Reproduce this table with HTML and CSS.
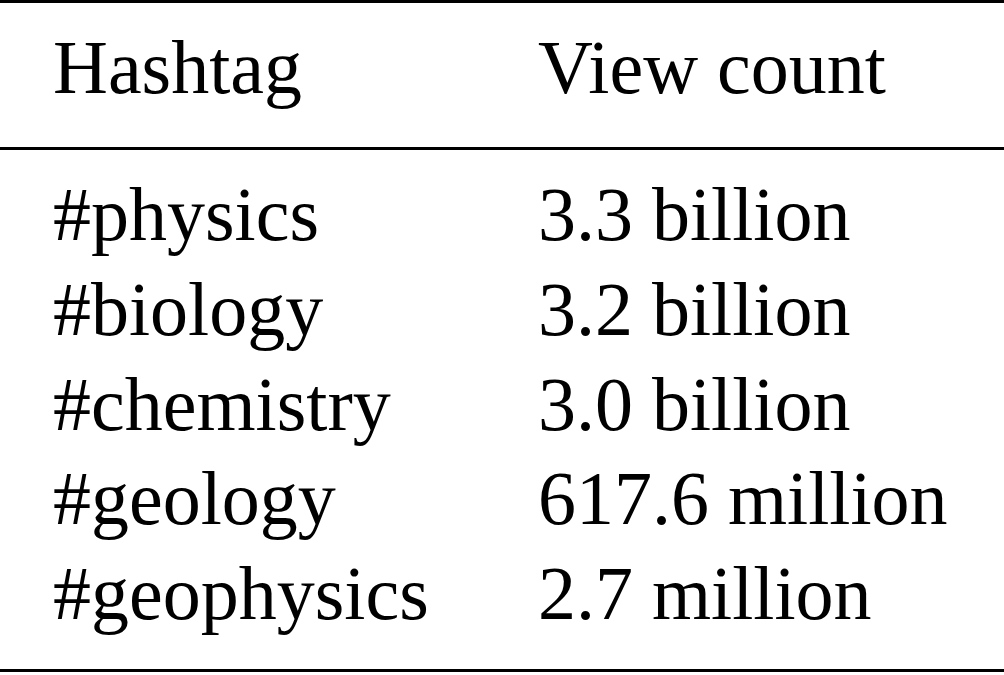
FILE: index.html
```html
<!DOCTYPE html>
<html>
<head>
<meta charset="utf-8">
<link rel="stylesheet" href="styles.css">
</head>
<body>
<table class="tbl">
  <thead>
    <tr class="head-row">
      <th class="c1">Hashtag</th>
      <th class="c2">View count</th>
    </tr>
  </thead>
  <tbody>
    <tr class="first"><td class="c1">#physics</td><td class="c2">3.3 billion</td></tr>
    <tr><td class="c1">#biology</td><td class="c2">3.2 billion</td></tr>
    <tr><td class="c1">#chemistry</td><td class="c2">3.0 billion</td></tr>
    <tr><td class="c1">#geology</td><td class="c2">617.6 million</td></tr>
    <tr class="last"><td class="c1">#geophysics</td><td class="c2">2.7 million</td></tr>
  </tbody>
</table>
</body>
</html>
```

FILE: styles.css
```css
html, body {
  margin: 0;
  padding: 0;
  background: #fff;
}
body {
  width: 1004px;
  height: 675px;
  overflow: hidden;
}
.tbl {
  width: 1004px;
  border-collapse: collapse;
  font-family: "Liberation Serif", "Times New Roman", serif;
  font-size: 76px;
  color: #000;
  border-top: 3px solid #000;
  border-bottom: 3px solid #000;
}
.tbl th, .tbl td {
  padding: 0;
  text-align: left;
  font-weight: normal;
  white-space: nowrap;
  vertical-align: baseline;
}
.tbl .c1 {
  width: 485px;
  padding-left: 53px;
}
.head-row th {
  line-height: 129px;
  padding-bottom: 15px;
  border-bottom: 3px solid #000;
}
.tbl td {
  line-height: 94.75px;
}
.first td {
  padding-top: 17px;
}
.last td {
  padding-bottom: 28px;
}
```
